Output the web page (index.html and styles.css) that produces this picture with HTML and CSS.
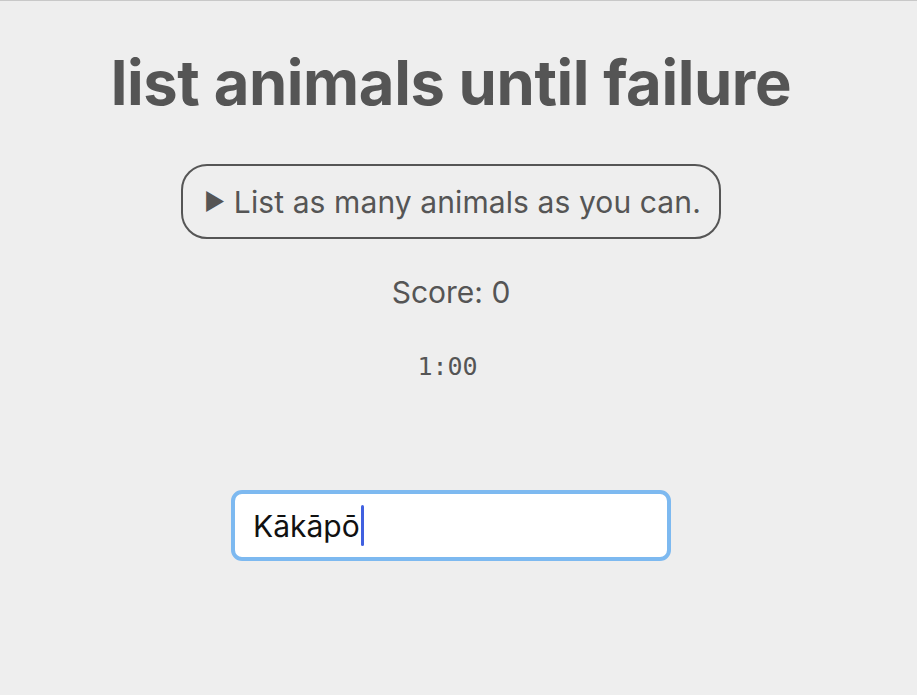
FILE: index.html
```html
<!DOCTYPE html>
<html lang="en">
<head>
<meta charset="utf-8">
<title>list animals until failure</title>
<link rel="stylesheet" href="styles.css">
</head>
<body>
<div class="topline"></div>
<main class="page">
  <h1 class="title">list animals until failure</h1>
  <button class="start" type="button"><span class="tri">&#9654;</span> List as many animals as you can.</button>
  <p class="score">Score: 0</p>
  <p class="timer">1:00</p>
  <div class="field"><span class="value">Kākāpō</span><span class="caret"></span></div>
</main>
</body>
</html>
```
FILE: styles.css
```css
html, body {
  margin: 0;
  padding: 0;
  background: #eeeeee;
}
body {
  font-family: Inter, "Noto Sans", sans-serif;
  color: #555555;
}
.topline {
  height: 1px;
  background: #c8c8c8;
}
.page {
  width: 902px;
  display: flex;
  flex-direction: column;
  align-items: center;
}
.title {
  margin: 46px 0 0;
  font-size: 61.5px;
  font-weight: 700;
  line-height: 72px;
  letter-spacing: -0.4px;
  color: #555555;
}
.start {
  margin-top: 45px;
  height: 75px;
  padding: 0 18px 0 21px;
  border: 2px solid #555555;
  border-radius: 26px;
  background: transparent;
  font-family: inherit;
  font-size: 30px;
  letter-spacing: 0.1px;
  color: #555555;
}
.tri {
  font-size: 23px;
  position: relative;
  top: -3px;
}
.score {
  margin: 33px 0 0;
  font-size: 30px;
  line-height: 40px;
}
.timer {
  margin: 40px 7px 0 0;
  font-family: "DejaVu Sans Mono", monospace;
  font-size: 25px;
  line-height: 30px;
}
.field {
  margin-top: 108px;
  box-sizing: border-box;
  width: 440px;
  height: 71px;
  border: 4px solid #7db9f0;
  border-radius: 11px;
  background: #ffffff;
  padding: 0 0 0 18px;
  display: flex;
  align-items: center;
  font-size: 30px;
  color: #111111;
}
.caret {
  display: inline-block;
  width: 3px;
  height: 41px;
  margin-left: 1px;
  border-radius: 2px;
  background: #4060e0;
}
```
